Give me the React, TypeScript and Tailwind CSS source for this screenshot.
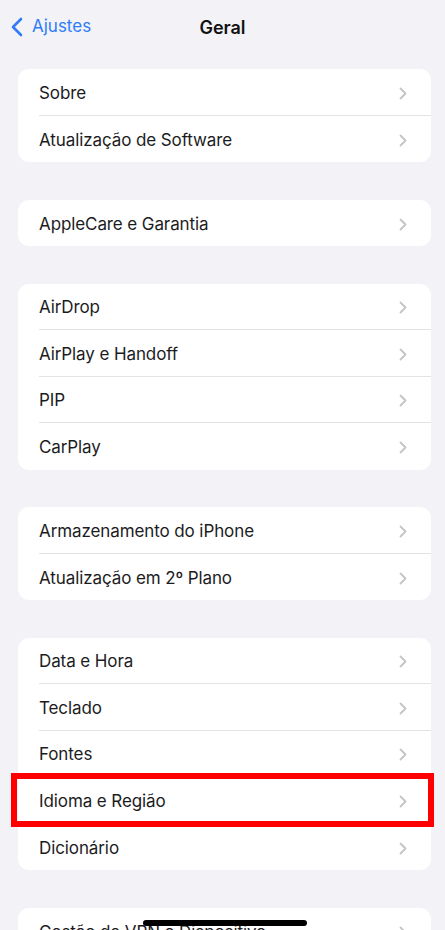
import React from 'react';

type Row = { label: string; highlight?: boolean };

const groups: Row[][] = [
  [{ label: 'Sobre' }, { label: 'Atualização de Software' }],
  [{ label: 'AppleCare e Garantia' }],
  [{ label: 'AirDrop' }, { label: 'AirPlay e Handoff' }, { label: 'PIP' }, { label: 'CarPlay' }],
  [{ label: 'Armazenamento do iPhone' }, { label: 'Atualização em 2º Plano' }],
  [
    { label: 'Data e Hora' },
    { label: 'Teclado' },
    { label: 'Fontes' },
    { label: 'Idioma e Região', highlight: true },
    { label: 'Dicionário' },
  ],
  [{ label: 'Gestão de VPN e Dispositivo' }],
];

function Chevron() {
  return (
    <svg width="8" height="13" viewBox="0 0 8 13" fill="none">
      <path d="M1.5 1.5 L6.5 6.5 L1.5 11.5" stroke="#c4c4c7" strokeWidth="1.8" strokeLinecap="round" strokeLinejoin="round" />
    </svg>
  );
}

function SettingsRow({ row, last }: { row: Row; last: boolean }) {
  return (
    <div className="relative flex h-[46.5px] pl-[21px]">
      <div
        className={
          'flex flex-1 items-center justify-between pr-[24px] pt-[3px] ' +
          (last ? '' : 'border-b border-[#e3e3e6]')
        }
      >
        <span className="text-[17px] text-[#1c1c1e] tracking-[-0.1px]">{row.label}</span>
        <Chevron />
      </div>
      {row.highlight && (
        <div className="absolute -left-[7px] -right-[3px] -top-[4px] -bottom-[3px] border-[6px] border-[#ff0000]" />
      )}
    </div>
  );
}

export default function App() {
  return (
    <div className="relative h-[930px] w-[445px] overflow-hidden bg-[#f2f2f7] font-['Inter',sans-serif]">
      {/* Nav bar */}
      <div className="relative flex h-[54px] items-center">
        <div className="flex items-center pl-[11px] text-[#2f7cf6]">
          <svg width="12" height="20" viewBox="0 0 12 20" fill="none">
            <path d="M10 2 L2 10 L10 18" stroke="#2f7cf6" strokeWidth="2.6" strokeLinecap="round" strokeLinejoin="round" />
          </svg>
          <span className="ml-[9px] text-[17px]">Ajustes</span>
        </div>
        <span className="absolute left-1/2 -translate-x-1/2 text-[18px] font-semibold text-[#111]">Geral</span>
      </div>

      <div className="ml-[18px] mr-[14px] mt-[15px] flex flex-col gap-[37.5px]">
        {groups.map((rows, gi) => (
          <div key={gi} className="rounded-[11px] bg-white">
            {rows.map((row, ri) => (
              <SettingsRow key={row.label} row={row} last={ri === rows.length - 1} />
            ))}
          </div>
        ))}
      </div>

      {/* Home indicator */}
      <div className="absolute left-[143px] top-[920px] h-[6px] w-[164px] rounded-full bg-black" />
    </div>
  );
}
